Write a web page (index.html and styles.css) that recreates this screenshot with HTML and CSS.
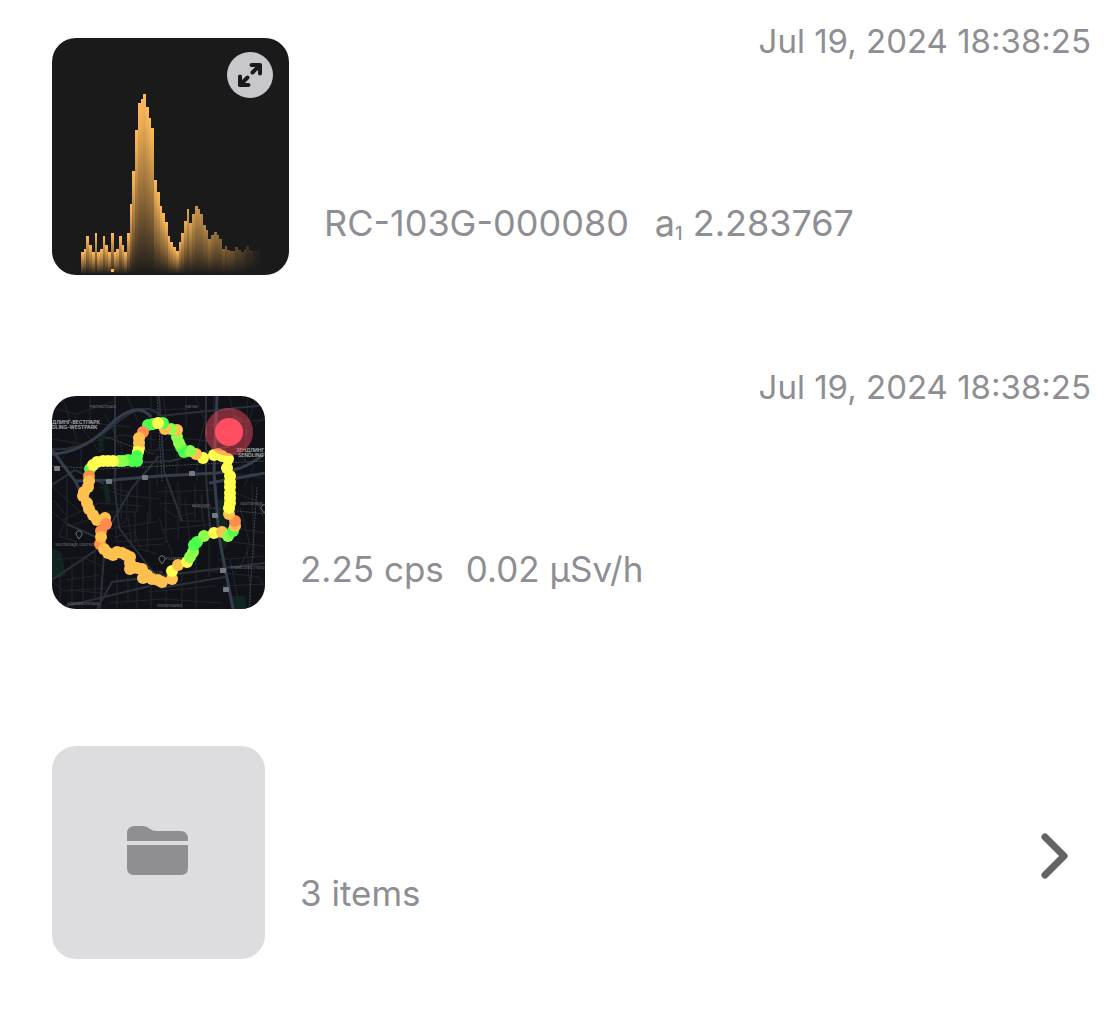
FILE: index.html
```html
<!DOCTYPE html>
<html lang="en">

<head>
	<meta charset="utf-8">
	<title>Library</title>
	<link rel="stylesheet" href="styles.css">
</head>

<body>
	<main class="list">
		<!-- Spectrum -->
		<article class="item spectrum-item">
			<div class="thumb thumb-large">
				<svg id="spectrum" viewBox="0 0 237 237" role="img" aria-label="Spectrum">
					<defs>
						<linearGradient id="barFill" x1="0" y1="0" x2="0" y2="1">
							<stop offset="0" stop-color="#ffba5a" />
							<stop offset="0.15" stop-color="#e8aa53" />
							<stop offset="0.6" stop-color="#856236" />
							<stop offset="1" stop-color="#1b1a19" />
						</linearGradient>
					</defs>
				</svg>
				<button class="expand-btn" type="button" aria-label="Expand">
					<svg viewBox="0 0 46 46">
						<path d="M25.500 20.500L33 13M24.500 13H33V21.500M20.500 25.500L13 33M13 24.500V33H21.500" />
					</svg>
				</button>
			</div>
			<div class="info">
				<time class="date">Jul 19, 2024 18:38:25</time>
				<p class="meta"><span>RC-103G-000080</span><span>a<span class="sub">1</span> 2.283767</span></p>
			</div>
		</article>

		<!-- Track -->
		<article class="item track-item">
			<div class="thumb">
				<svg viewBox="0 0 213 213" role="img" aria-label="Track map">
					<rect width="213" height="213" fill="#101217" />
					<g fill="#10251f">
						<path d="M46 39h5l1 16-5 1zM51 87l5 1 3 18-5 2zM0 152l9 4 5 24-14 3zM164 103l10 1 2 43-8 12zM180 200h13l2 13h-15zM181 18l10 4-4 14-9-4z" />
					</g>
					<g class="road-small">
						<path d="M0 12L24 18 63 5M10 0L25 44 10 63M38 0V27L79 31M53 18L70 53 60 90M75 0L86 26M99 0V54M79 14L136 13M111 0L117 39 100 59M134 0V32M0 43L29 48 70 39 104 44M77 54H144M29 48V77M22 20L48 57" />
						<path d="M143 0L153 24 145 55M162 0V35M177 0L184 26 213 24M154 28L197 35 213 20M196 0L193 65M125 42L170 46M105 58V90M125 50V78M145 55V84M105 96L164 94M108 107L160 110M114 90V147M126 86V143M143 88V123M98 84V127M85 84V116M69 87V123M0 90L28 116M15 81V141M48 91L69 99 107 103M51 116H83V147" />
						<path d="M10 124L47 107 90 110M0 116L18 130 45 121M62 119L65 146 115 142M55 133L104 126M76 121L80 149M96 116L95 155M107 122L120 158M69 151L112 148M109 134L160 128M133 104L138 145M149 101L153 139M183 97L205 105 213 126M188 111L198 149 188 172M200 88L202 162M181 132L213 137M173 145L213 150" />
						<path d="M0 164L30 161 50 170M14 184L47 179M18 194L57 198M8 176V213M20 166V210M31 163V207M0 185L12 195 54 192M43 156V202M65 178V213M76 174V207M85 183V213M99 188V213M114 187V213M130 165V213M144 146V213M157 139V181M57 207L110 203 170 207M96 196L164 190M166 164L213 160M157 175L207 181 213 192M178 163L186 204M195 150L199 206M171 190L213 188" />
						<path d="M61 92L76 96 74 125 63 132M128 96V125H150V99M111 112L124 121 141 117M82 133L88 153 105 158M62 141L84 136M180 56L202 70 192 91M184 78L213 82M2 104L15 121 7 140 25 146M205 0L197 24" />
					</g>
					<g class="road-medium">
						<path d="M0 53Q31 56 62 29T108 20L213 9M63 0V92L67 132M0 89L23 74 52 88M79 67L119 65 178 50M107 0L112 75 130 125M154 0V80L158 132M15 128L53 145 48 213M0 184L44 154 80 92 107 60M45 213L60 186 213 167M67 132L107 184M108 192L173 181M6 212L98 190" />
					</g>
					<g class="road-large">
						<path d="M0 58Q30 57 57 30T99 21M0 54L23 85 61 84 107 80 165 77Q193 75 213 57M23 85L35 108M165 0L162 76 167 141 181 213M157 87L213 77" />
					</g>
					<path class="rail" d="M0 70L51 73 213 65M105 0L110 85M51 40L101 58M140 110L213 118M205 91L197 213" />
					<g class="badges">
						<rect x="2" y="70" width="6" height="5" rx="1" />
						<rect x="54" y="83" width="6" height="5" rx="1" />
						<rect x="90" y="79" width="6" height="5" rx="1" />
						<rect x="137" y="75" width="6" height="5" rx="1" />
						<rect x="160" y="117" width="6" height="5" rx="1" />
						<rect x="168" y="172" width="6" height="5" rx="1" />
						<rect x="171" y="191" width="6" height="5" rx="1" />
					</g>
					<g class="map-label">
						<text x="38" y="12">Partnachplatz</text>
						<text x="133" y="12">Harras</text>
						<text x="3" y="150">Sportanlage Obersend</text>
						<text x="140" y="111">München</text>
						<text x="188" y="109">Sportanlage</text>
						<text x="178" y="173">Thalkirchen (Tierp</text>
						<text x="15" y="209">Aidenbachstraße</text>
						<text x="105" y="211">Siemensallee</text>
						<text x="114" y="164">FLEMING</text>
						<text x="97" y="178">SOLLN</text>
					</g>
					<g class="district">
						<text x="0" y="28">ДЛИНГ-ВЕСТПАРК</text>
						<text x="0" y="33">DLING-WESTPARK</text>
						<text x="184" y="56">ЗЕНДЛИНГ</text>
						<text x="186" y="61">SENDLING</text>
					</g>
					<g class="pins">
						<path d="M27 143l-2-3a3 3 0 1 1 4 0zM110 168l-2-3a3 3 0 1 1 4 0zM212 117l-2-3a3 3 0 1 1 4 0z" />
					</g>
					<g id="track"></g>
					<circle cx="177" cy="36" r="24" fill="#ff4d62" fill-opacity="0.45" />
					<circle cx="177" cy="36" r="14" fill="#ff4d62" />
				</svg>
			</div>
			<div class="info">
				<time class="date">Jul 19, 2024 18:38:25</time>
				<p class="meta"><span>2.25 cps</span><span>0.02 µSv/h</span></p>
			</div>
		</article>

		<!-- Folder -->
		<a class="item folder-item" href="#">
			<div class="thumb thumb-folder">
				<svg class="folder-icon" viewBox="0 0 62 50" aria-hidden="true">
					<path d="M0 15V8Q0 0 8 0H16Q20 0 23 3Q26 5 30 5H53Q61 5 61 13V15Z" />
					<path d="M0 19H61V42Q61 49 54 49H7Q0 49 0 42Z" />
				</svg>
			</div>
			<div class="info">
				<p class="meta">3 items</p>
			</div>
			<svg class="chevron" viewBox="0 0 26 44" aria-hidden="true">
				<path d="M3 3L22 22L3 41" />
			</svg>
		</a>
	</main>

	<script>
		const svgNS = "http://www.w3.org/2000/svg";

		// Top of every channel, measured from the top of the chart
		const channels = [
			214, 211, 198, 207, 214, 195, 214, 211, 198, 207, 214, 195, 214, 211, 198, 207, 214,
			195, 166, 133, 92, 65, 61, 56, 69, 80, 90, 142, 154, 168, 175, 184, 198, 204, 209, 213,
			204, 195, 183, 171, 185, 176, 168, 171, 176, 187, 192, 201, 197, 194, 197, 201, 211,
			208, 212, 213, 213, 209, 212, 214, 211, 208, 212, 213, 213, 211
		];

		function drawBar(index, top, height, fill) {
			const bar = document.createElementNS(svgNS, "rect");
			bar.setAttribute("x", 29 + index * 2.71);
			bar.setAttribute("y", top);
			bar.setAttribute("width", 2.71);
			bar.setAttribute("height", height);
			bar.setAttribute("fill", fill);
			// the right side of the spectrum fades out
			bar.setAttribute("opacity", index < 35 ? 1 : Math.max(0.05, 1 - (index - 35) / 31));
			document.getElementById("spectrum").appendChild(bar);
		}

		channels.forEach((top, index) => drawBar(index, top, 236 - top, "url(#barFill)"));
		drawBar(11, 231, 3, "#ffba5a");

		const colors = { y: "#ffff4d", g: "#4dff4d", l: "#8cff4d", o: "#ffc04d", r: "#ff8c4d" };

		const points = [
			[101, 28, "g"], [96, 29, "g"], [91, 36, "r"], [87, 52, "y"], [87, 47, "o"], [87, 42, "o"],
			[86, 56, "y"], [85, 60, "g"], [85, 65, "g"], [80, 65, "g"], [76, 64, "g"], [71, 65, "l"], [67, 65, "l"],
			[38, 73, "g"], [41, 69, "y"], [45, 66, "y"], [51, 65, "y"], [56, 65, "y"], [61, 65, "y"],
			[37, 80, "r"], [37, 85, "o"], [36, 91, "o"], [32, 96, "o"], [31, 100, "o"], [35, 107, "o"],
			[37, 113, "o"], [41, 119, "o"], [45, 124, "o"], [53, 122, "o"], [54, 128, "r"], [49, 135, "r"],
			[48, 148, "r"], [49, 141, "o"], [52, 153, "o"], [56, 157, "o"], [61, 159, "o"], [65, 156, "o"],
			[70, 157, "o"], [74, 159, "o"], [78, 161, "o"], [78, 167, "o"], [78, 173, "o"], [85, 172, "o"],
			[90, 173, "o"], [91, 182, "o"], [95, 179, "o"], [100, 183, "o"], [106, 184, "o"], [110, 186, "o"],
			[120, 183, "o"], [120, 175, "y"], [126, 169, "o"], [135, 166, "y"], [138, 161, "l"], [141, 156, "l"],
			[142, 149, "g"], [145, 146, "g"], [152, 140, "l"], [162, 137, "y"], [170, 136, "o"], [176, 140, "l"],
			[181, 135, "g"], [183, 130, "o"], [183, 125, "r"], [177, 118, "o"], [177, 112, "y"], [178, 107, "y"],
			[178, 102, "y"], [178, 97, "y"], [178, 91, "y"], [178, 86, "y"], [178, 80, "y"], [175, 72, "y"],
			[176, 63, "y"], [166, 58, "o"], [162, 59, "y"], [170, 60, "y"], [151, 62, "y"], [144, 58, "o"],
			[132, 56, "g"], [138, 55, "l"], [129, 51, "g"], [127, 47, "l"], [125, 41, "l"], [125, 34, "o"],
			[119, 33, "l"], [113, 33, "o"], [111, 27, "g"], [106, 27, "y"]
		];

		points.forEach(([x, y, level]) => {
			const dot = document.createElementNS(svgNS, "circle");
			dot.setAttribute("cx", x);
			dot.setAttribute("cy", y);
			dot.setAttribute("r", 6);
			dot.setAttribute("fill", colors[level]);
			document.getElementById("track").appendChild(dot);
		});
	</script>
</body>

</html>
```
FILE: styles.css
```css
* {
	box-sizing: border-box;
}

body {
	margin: 0;
	font-family: Inter, "Noto Sans", sans-serif;
	background-color: #fff;
	color: #8e8e93;
}

.list {
	padding: 19px 24px 48px 52px;
}

.item {
	display: flex;
	gap: 35px;
	color: inherit;
	text-decoration: none;
}

.track-item {
	margin-top: 90px;
}

.folder-item {
	margin-top: 137px;
}

.thumb {
	position: relative;
	flex: none;
	width: 213px;
	height: 213px;
	overflow: hidden;
	border-radius: 24px;
}

.thumb svg {
	display: block;
}

.thumb-large {
	width: 237px;
	height: 237px;
	background-color: #1a1a1a;
}

.spectrum-item .thumb {
	margin-top: 19px;
}

.track-item .thumb {
	margin-top: 31px;
}

/* Button over the spectrum */
.expand-btn {
	position: absolute;
	top: 14px;
	right: 16px;
	width: 46px;
	height: 46px;
	padding: 0;
	border: none;
	border-radius: 50%;
	background-color: #c8c7cc;
	cursor: pointer;
}

.expand-btn path {
	fill: none;
	stroke: #1a1a1a;
	stroke-width: 4;
	stroke-linecap: round;
	stroke-linejoin: round;
}

#spectrum rect {
	shape-rendering: crispEdges;
}

.info {
	display: flex;
	flex: 1;
	flex-direction: column;
	justify-content: space-between;
	padding-bottom: 30px;
}

.track-item .info {
	padding-bottom: 18px;
}

.folder-item .info {
	justify-content: flex-end;
	padding-bottom: 44px;
}

.date {
	align-self: flex-end;
	font-size: 33px;
	line-height: 44px;
}

.meta {
	display: flex;
	gap: 22px;
	margin: 0;
	font-size: 35px;
	line-height: 44px;
}

.spectrum-item .meta {
	gap: 26px;
	font-size: 36px;
}

.sub {
	position: relative;
	top: 4px;
	font-size: 18px;
	font-weight: 500;
	line-height: 1;
}

/* Map */
.road-small,
.road-medium,
.road-large,
.rail {
	fill: none;
	stroke: #22262c;
	stroke-width: 1;
}

.road-medium {
	stroke: #2a303a;
	stroke-width: 2;
}

.road-large {
	stroke: #353d4c;
	stroke-width: 3;
}

.rail {
	stroke: #42464d;
	stroke-dasharray: 2 1;
}

.badges {
	fill: #747a83;
}

.map-label {
	fill: #70747a;
	font-size: 4px;
}

.district {
	fill: #b4b6b9;
	font-size: 5px;
	font-weight: 600;
}

.pins {
	fill: none;
	stroke: #70747a;
}

/* Folder */
.thumb-folder {
	display: flex;
	align-items: center;
	justify-content: center;
	padding: 0 2px 3px 0;
	background-color: #dddddf;
}

.folder-icon {
	width: 62px;
	height: 50px;
	fill: #8e8e93;
}

.chevron {
	align-self: center;
	width: 26px;
	height: 44px;
	margin-top: 6px;
	margin-right: 23px;
	overflow: visible;
	fill: none;
	stroke: #636366;
	stroke-width: 7;
	stroke-linecap: round;
	stroke-linejoin: round;
}
```
